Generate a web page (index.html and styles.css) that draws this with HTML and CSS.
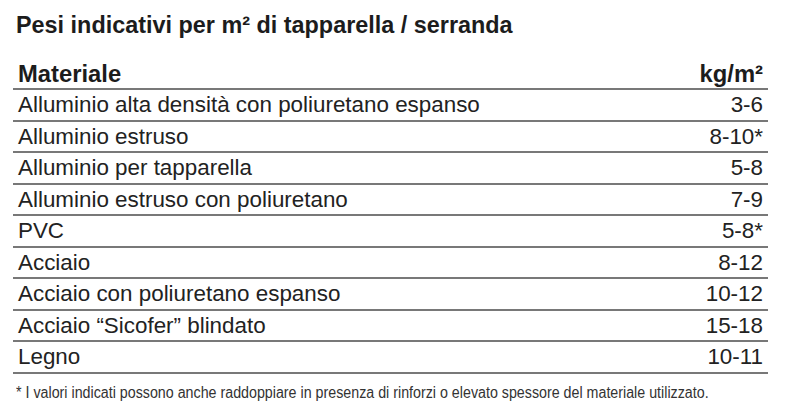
FILE: index.html
```html
<!DOCTYPE html>
<html lang="it">
<head>
<meta charset="utf-8">
<title>Pesi indicativi per m² di tapparella / serranda</title>
<link rel="stylesheet" href="styles.css">
</head>
<body>
<div class="sheet">
  <h1 class="title">Pesi indicativi per m² di tapparella / serranda</h1>
  <table class="weights">
    <thead>
      <tr><th class="mat">Materiale</th><th class="val">kg/m²</th></tr>
    </thead>
    <tbody>
      <tr><td class="mat">Alluminio alta densità con poliuretano espanso</td><td class="val">3-6</td></tr>
      <tr><td class="mat">Alluminio estruso</td><td class="val">8-10*</td></tr>
      <tr><td class="mat">Alluminio per tapparella</td><td class="val">5-8</td></tr>
      <tr><td class="mat">Alluminio estruso con poliuretano</td><td class="val">7-9</td></tr>
      <tr><td class="mat">PVC</td><td class="val">5-8*</td></tr>
      <tr><td class="mat">Acciaio</td><td class="val">8-12</td></tr>
      <tr><td class="mat">Acciaio con poliuretano espanso</td><td class="val">10-12</td></tr>
      <tr><td class="mat">Acciaio “Sicofer” blindato</td><td class="val">15-18</td></tr>
      <tr><td class="mat">Legno</td><td class="val">10-11</td></tr>
    </tbody>
  </table>
  <p class="note"><span class="note-text">* I valori indicati possono anche raddoppiare in presenza di rinforzi o elevato spessore del materiale utilizzato.</span></p>
</div>
</body>
</html>
```
FILE: styles.css
```css
html, body {
  margin: 0;
  padding: 0;
  background: #ffffff;
}
body {
  font-family: "Liberation Sans", Arial, sans-serif;
  color: #222222;
  width: 786px;
  height: 419px;
  overflow: hidden;
}
.sheet {
  padding-top: 11px;
}
.title {
  margin: 0 0 19.5px 16px;
  font-size: 23.4px;
  line-height: 28px;
  font-weight: bold;
  color: #1c1c1c;
}
.weights {
  margin-left: 13px;
  width: 755px;
  border-collapse: collapse;
  font-size: 22.4px;
}
.weights tr {
  border-bottom: 2px solid #787878;
}
.weights th,
.weights td {
  padding: 0 5px;
  height: 29.5px;
  line-height: 29.5px;
  white-space: nowrap;
}
.weights th {
  font-size: 23.8px;
  font-weight: bold;
  color: #1c1c1c;
}
.mat {
  text-align: left;
}
.val {
  text-align: right;
}
.note {
  margin: 9.3px 0 0 16px;
  font-size: 16px;
  line-height: 20px;
  color: #333333;
  white-space: nowrap;
}
.note-text {
  display: inline-block;
  transform: scaleX(0.891);
  transform-origin: left center;
}
```
